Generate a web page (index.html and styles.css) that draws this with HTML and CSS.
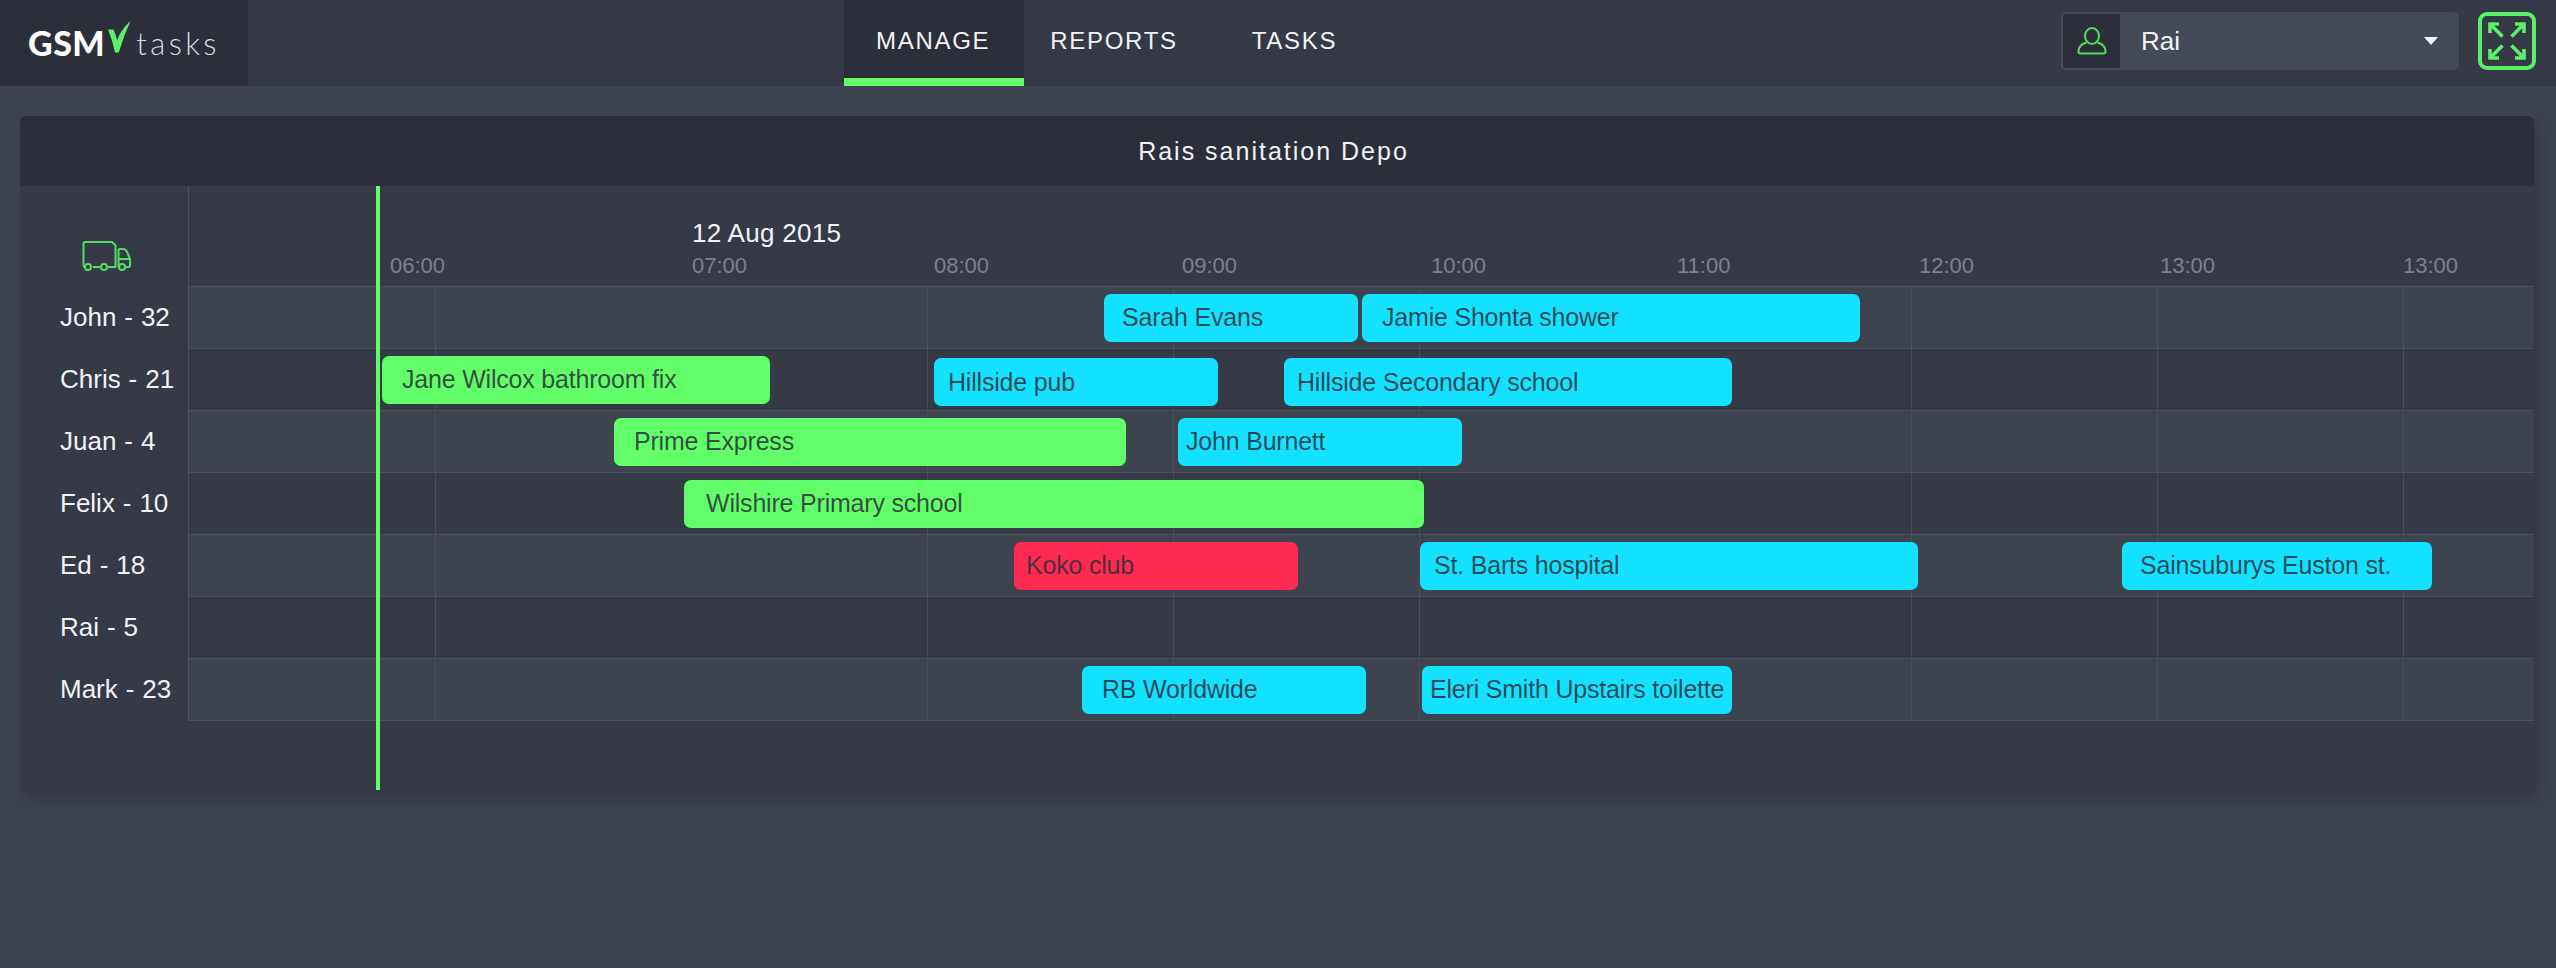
FILE: index.html
```html
<!DOCTYPE html>
<html lang="en">
<head>
<meta charset="utf-8">
<title>GSM tasks</title>
<link rel="stylesheet" href="styles.css">
</head>
<body>
<header class="topbar">
  <div class="logo">
    <span class="logo-gsm">GSM</span>
    <svg class="logo-check" viewBox="0 0 24 32" width="24" height="32" aria-hidden="true"><path d="M0 8.500H5.500Q8 14 9.200 19.500Q12 9.500 22.500 0Q15.500 15 10.800 31.500H7Q4.500 19.500 0 8.500Z"/></svg>
    <span class="logo-tasks">tasks</span>
  </div>
  <nav class="nav">
    <a class="tab tab-active">MANAGE</a>
    <a class="tab">REPORTS</a>
    <a class="tab">TASKS</a>
  </nav>
  <div class="controls">
    <div class="select">
      <span class="select-icon">
        <svg viewBox="0 0 30 28" width="30" height="28" aria-hidden="true"><ellipse cx="15" cy="9" rx="7" ry="8"/><path d="M9.500 15.500C4.500 17 1.500 20.500 1.500 24.500Q1.500 26.500 3.500 26.500H26.500Q28.500 26.500 28.500 24.500C28.500 20.500 25.500 17 20.500 15.500"/></svg>
      </span>
      <span class="select-value">Rai</span>
      <span class="select-arrow"></span>
    </div>
    <button class="expand" type="button" aria-label="Expand">
      <svg viewBox="0 0 36 36" width="36" height="36" aria-hidden="true"><path d="M1 10V1H10M1 1L13.500 13.500M26 1H35V10M35 1L22.500 13.500M1 26V35H10M1 35L13.500 22.500M26 35H35V26M35 35L22.500 22.500"/></svg>
    </button>
  </div>
</header>
<main class="page">
  <section class="card">
    <h1 class="card-title">Rais sanitation Depo</h1>
    <div class="card-body">
      <aside class="drivers">
        <div class="drivers-head">
          <svg class="truck" viewBox="0 0 50 30" width="50" height="30" aria-hidden="true"><path d="M3 26Q1.500 26 1.500 24V3Q1.500 1 3.500 1H30L33.500 4.500V26H26M18 26H11"/><path d="M36.500 8H41Q44 8 45.500 12L48 18V24.500Q48 26 46.500 26H44M36.500 26V8M36.500 18H48"/><circle cx="6" cy="26" r="3"/><circle cx="22" cy="26" r="3"/><circle cx="40" cy="26" r="3"/></svg>
        </div>
        <div class="driver">John - 32</div>
        <div class="driver">Chris - 21</div>
        <div class="driver">Juan - 4</div>
        <div class="driver">Felix - 10</div>
        <div class="driver">Ed - 18</div>
        <div class="driver">Rai - 5</div>
        <div class="driver">Mark - 23</div>
      </aside>
      <div class="timeline">
        <div class="axis">
          <span class="date" style="left:503px">12 Aug 2015</span>
          <span class="hour" style="left:201px">06:00</span>
          <span class="hour" style="left:503px">07:00</span>
          <span class="hour" style="left:745px">08:00</span>
          <span class="hour" style="left:993px">09:00</span>
          <span class="hour" style="left:1242px">10:00</span>
          <span class="hour" style="left:1488px">11:00</span>
          <span class="hour" style="left:1730px">12:00</span>
          <span class="hour" style="left:1971px">13:00</span>
          <span class="hour" style="left:2214px">13:00</span>
        </div>
        <div class="rows">
          <div class="gridlines">
            <i class="gridline" style="left:246px"></i>
            <i class="gridline" style="left:738px"></i>
            <i class="gridline" style="left:984px"></i>
            <i class="gridline" style="left:1230px"></i>
            <i class="gridline" style="left:1722px"></i>
            <i class="gridline" style="left:1968px"></i>
            <i class="gridline" style="left:2214px"></i>
          </div>
          <div class="row row-light">
            <div class="bar bar-blue" style="left:915px;width:254px;padding-left:18px">Sarah Evans</div>
            <div class="bar bar-blue" style="left:1173px;width:498px;padding-left:20px">Jamie Shonta shower</div>
          </div>
          <div class="row">
            <div class="bar bar-green" style="left:193px;width:388px;padding-left:20px">Jane Wilcox bathroom fix</div>
            <div class="bar bar-blue bar-low" style="left:745px;width:284px;padding-left:14px">Hillside pub</div>
            <div class="bar bar-blue bar-low" style="left:1095px;width:448px;padding-left:13px">Hillside Secondary school</div>
          </div>
          <div class="row row-light">
            <div class="bar bar-green" style="left:425px;width:512px;padding-left:20px">Prime Express</div>
            <div class="bar bar-blue" style="left:989px;width:284px;padding-left:8px">John Burnett</div>
          </div>
          <div class="row">
            <div class="bar bar-green" style="left:495px;width:740px;padding-left:22px">Wilshire Primary school</div>
          </div>
          <div class="row row-light">
            <div class="bar bar-red" style="left:825px;width:284px;padding-left:12px">Koko club</div>
            <div class="bar bar-blue" style="left:1231px;width:498px;padding-left:14px">St. Barts hospital</div>
            <div class="bar bar-blue" style="left:1933px;width:310px;padding-left:18px">Sainsuburys Euston st.</div>
          </div>
          <div class="row"></div>
          <div class="row row-light">
            <div class="bar bar-blue" style="left:893px;width:284px;padding-left:20px">RB Worldwide</div>
            <div class="bar bar-blue" style="left:1233px;width:310px;padding-left:8px">Eleri Smith Upstairs toilette</div>
          </div>
        </div>
        <div class="now"></div>
      </div>
    </div>
  </section>
</main>
</body>
</html>
```
FILE: styles.css
```css
* { box-sizing: border-box; }

html, body {
  margin: 0;
  height: 100%;
}

body {
  background: #3e4350;
  color: #f1f2f6;
  font-family: "Liberation Sans", Arial, sans-serif;
  overflow: hidden;
}

.topbar {
  display: flex;
  height: 86px;
  background: #363a46;
}

.logo {
  display: flex;
  align-items: center;
  width: 248px;
  padding-left: 28px;
  background: #2c2f3a;
  font-family: Lato, sans-serif;
  line-height: 1;
}

.logo-gsm {
  font-size: 34px;
  font-weight: 900;
  letter-spacing: 0.5px;
  color: #fff;
}

.logo-check {
  flex: none;
  margin: -12px 0 0 3px;
  fill: #5cf068;
}

.logo-tasks {
  margin-left: 4px;
  font-size: 31px;
  font-weight: 300;
  letter-spacing: 3.4px;
  color: #d8dae1;
}

.nav {
  display: flex;
  margin-left: 596px;
}

.tab {
  display: flex;
  align-items: center;
  padding: 4px 34px 0 32px;
  border-bottom: 8px solid transparent;
  font-size: 24px;
  letter-spacing: 1.7px;
  color: #f1f2f6;
}

.tab + .tab {
  padding-left: 26px;
}

.tab:last-child {
  margin-left: 14px;
}

.tab-active {
  background: #2c2f3a;
  border-bottom-color: #62fe69;
}

.controls {
  display: flex;
  gap: 19px;
  margin: 12px 20px 0 auto;
  height: 58px;
}

.select {
  display: flex;
  align-items: center;
  width: 398px;
  padding: 2px;
  border-radius: 5px;
  background: #454a58;
}

.select-icon {
  display: flex;
  align-items: center;
  justify-content: center;
  width: 57px;
  height: 54px;
  border-radius: 3px 0 0 3px;
  background: #2c2f3a;
}

.select-icon svg {
  fill: none;
  stroke: #52dd60;
  stroke-width: 2;
}

.select-value {
  margin-left: 21px;
  font-size: 26px;
  color: #f1f2f6;
}

.select-arrow {
  margin: 0 19px 0 auto;
  border-style: solid;
  border-width: 8px 7px 0;
  border-color: #f4f5f8 transparent transparent;
}

.expand {
  display: flex;
  align-items: center;
  justify-content: center;
  width: 58px;
  height: 58px;
  padding: 0;
  border: 4px solid #5cf068;
  border-radius: 9px;
  background: transparent;
}

.expand svg {
  overflow: visible;
  fill: none;
  stroke: #5cf068;
  stroke-width: 3.6;
}

.page {
  padding: 30px 22px 0 20px;
}

.card {
  height: 676px;
  border-radius: 6px;
  background: #363a46;
  box-shadow: 4px 6px 14px rgba(0, 0, 0, 0.2);
}

.card-title {
  margin: 0;
  height: 70px;
  padding-right: 7px;
  border-radius: 6px 6px 0 0;
  background: #2c2f3a;
  font-size: 25px;
  font-weight: 400;
  line-height: 71px;
  letter-spacing: 2px;
  text-align: center;
  color: #f1f2f6;
}

.card-body {
  display: flex;
  height: 606px;
}

.drivers {
  flex: none;
  width: 169px;
  height: 535px;
  padding-left: 40px;
  border-right: 1px solid #4d515d;
}

.drivers-head {
  display: flex;
  align-items: flex-start;
  height: 100px;
  padding: 55px 0 0 22px;
}

.truck {
  overflow: visible;
  fill: none;
  stroke: #52dd60;
  stroke-width: 2;
}

.driver {
  height: 62px;
  font-size: 26px;
  line-height: 62px;
  word-spacing: 0.7px;
  white-space: nowrap;
}

.timeline {
  position: relative;
  flex: 1;
  min-width: 0;
}

.axis {
  position: relative;
  height: 100px;
}

.date {
  position: absolute;
  top: 31px;
  font-size: 26px;
  line-height: 32px;
  letter-spacing: 0.3px;
}

.hour {
  position: absolute;
  top: 64px;
  font-size: 22px;
  line-height: 32px;
  color: #7d808b;
}

.rows {
  position: relative;
  border-bottom: 1px solid #4d515d;
}

.gridlines {
  position: absolute;
  inset: 0;
  z-index: 1;
}

.gridline {
  position: absolute;
  top: 0;
  bottom: 0;
  width: 1px;
  background: #4b4f5b;
}

.row {
  position: relative;
  height: 62px;
  border-top: 1px solid #4d515d;
}

.row-light {
  background: #3e4350;
}

.bar {
  position: absolute;
  top: 7px;
  z-index: 2;
  height: 48px;
  border-radius: 7px;
  font-size: 25px;
  letter-spacing: -0.2px;
  line-height: 47px;
  white-space: nowrap;
  color: rgba(44, 47, 58, 0.85);
}

.bar-low {
  top: 9px;
  line-height: 49px;
}

.bar-blue {
  background: #12e2ff;
}

.bar-green {
  background: #62fe69;
}

.bar-red {
  background: #ff2a52;
}

.now {
  position: absolute;
  left: 187px;
  top: 0;
  z-index: 3;
  width: 4px;
  height: 604px;
  background: #62fe69;
}
```
